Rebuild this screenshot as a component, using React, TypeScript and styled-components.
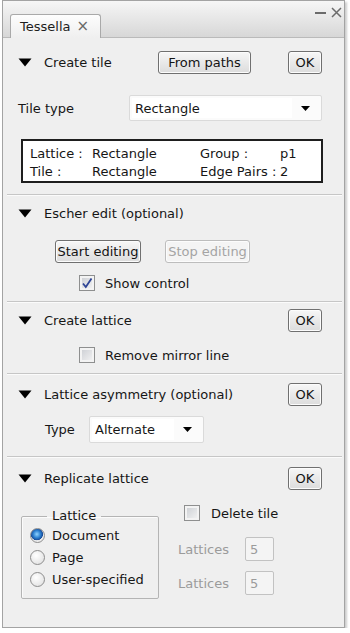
import React from "react";
import styled, { createGlobalStyle } from "styled-components";

const GlobalStyle = createGlobalStyle`
	html, body {
		margin: 0;
		padding: 0;
		background: #ffffff;
	}
	body {
		font-family: "DejaVu Sans", "Liberation Sans", sans-serif;
		font-size: 13px;
		color: #161616;
	}
`;

const Window = styled.div`
	margin-left: 2px;
	width: 341px;
	height: 626px;
	border: 1px solid #a3a3a3;
	background: #efefef;
	box-shadow: 2px 2px 2px rgba(0, 0, 0, 0.2);
	display: flex;
	flex-direction: column;
`;

const TitleBar = styled.div`
	box-sizing: border-box;
	height: 37px;
	display: flex;
	align-items: flex-end;
	padding-left: 7px;
	background: linear-gradient(#f6f6f6, #d7d7d7);
	border-bottom: 1px solid #bababa;
`;

const Tab = styled.div`
	box-sizing: border-box;
	width: 91px;
	height: 24px;
	margin-bottom: -1px;
	display: flex;
	align-items: center;
	gap: 6px;
	padding-left: 9px;
	border: 1px solid #a9a9a9;
	border-bottom: none;
	border-radius: 3px 3px 0 0;
	background: linear-gradient(#fdfdfd, #efefef);
	color: #1d1d1d;
`;

const TabClose = styled.span`
	color: #6a6a6a;
	font-size: 15px;
	line-height: 1;
`;

const WindowControls = styled.div`
	margin-left: auto;
	margin-right: 2px;
	align-self: flex-start;
	margin-top: 6px;
	display: flex;
	gap: 5px;
`;

const Section = styled.div<{ $top: number; $bottom: number }>`
	margin: 0 2px 0 4px;
	padding: ${(p) => p.$top}px 20px ${(p) => p.$bottom}px 11px;
	display: flex;
	flex-direction: column;
`;

const Rule = styled.div`
	margin: 0 2px 0 4px;
	border-top: 1px solid #c6c6c6;
	border-bottom: 1px solid #fbfbfb;
`;

const Header = styled.div`
	height: 23px;
	display: flex;
	align-items: center;
`;

const HeaderTitle = styled.span`
	margin-left: 12px;
`;

const Spacer = styled.div`
	flex: 1;
`;

const Button = styled.button<{ $w: number; $gap?: number }>`
	box-sizing: border-box;
	width: ${(p) => p.$w}px;
	height: 23px;
	margin: 0 ${(p) => p.$gap ?? 0}px 0 0;
	padding: 0;
	font: inherit;
	color: #141414;
	border: 1px solid #707070;
	border-radius: 3px;
	background: linear-gradient(#f7f7f7, #e9e9e9 50%, #dcdcdc);
	box-shadow: inset 0 0 0 1px #fcfcfc;

	&:disabled {
		color: #a4a4a4;
		border-color: #bdbdbd;
		background: #f4f4f4;
	}
`;

const Row = styled.div<{ $mt: number; $pl?: number }>`
	margin-top: ${(p) => p.$mt}px;
	padding-left: ${(p) => p.$pl ?? 0}px;
	display: flex;
	align-items: center;
`;

const Label = styled.span<{ $w?: number; $muted?: boolean }>`
	width: ${(p) => (p.$w ? `${p.$w}px` : "auto")};
	flex-shrink: 0;
	color: ${(p) => (p.$muted ? "#9b9b9b" : "inherit")};
`;

const Select = styled.div<{ $w: number; $h: number }>`
	box-sizing: border-box;
	width: ${(p) => p.$w}px;
	height: ${(p) => p.$h}px;
	display: flex;
	align-items: stretch;
	border: 1px solid #dadada;
	border-radius: 2px;
	background: #fbfbfb;
	padding: 2px;
`;

const SelectField = styled.div`
	flex: 1;
	display: flex;
	align-items: center;
	padding-left: 3px;
	background: #ffffff;
`;

const SelectArrow = styled.div`
	width: 27px;
	display: flex;
	align-items: center;
	justify-content: center;
`;

const InfoBox = styled.div`
	box-sizing: border-box;
	margin: 18px 0 0 3px;
	width: 302px;
	height: 44px;
	border: 2px solid #1e1e1e;
	background: #ffffff;
	padding: 3px 0 0 7px;
	display: grid;
	grid-template-columns: 62px 108px 80px auto;
	grid-auto-rows: 18px;
	align-items: center;
	white-space: nowrap;
`;

const CheckBox = styled.span`
	box-sizing: border-box;
	width: 16px;
	height: 16px;
	flex-shrink: 0;
	border: 1px solid #8e8f8f;
	background: linear-gradient(135deg, #c9ccd1, #f6f6f6);
	box-shadow: inset 0 0 0 2px #f3f3f3;
	display: flex;
	align-items: center;
	justify-content: center;
`;

const CheckLabel = styled.span<{ $gap: number }>`
	margin-left: ${(p) => p.$gap}px;
`;

const BottomRow = styled.div`
	margin-top: 15px;
	display: flex;
	align-items: flex-start;
`;

const GroupBox = styled.fieldset`
	box-sizing: border-box;
	margin: 3px 0 0 3px;
	width: 138px;
	padding: 0 0 8px 7px;
	border: 1px solid #b4b4b4;
	border-radius: 2px;
	box-shadow: inset 1px 1px 0 #fbfbfb;
	min-inline-size: 0;
`;

const GroupLegend = styled.legend`
	margin-left: 18px;
	padding: 0 5px;
	line-height: 16px;
`;

const RadioRow = styled.div`
	height: 22px;
	display: flex;
	align-items: center;
`;

const RadioDot = styled.span<{ $on?: boolean }>`
	box-sizing: border-box;
	width: 15px;
	height: 15px;
	margin: 0 7px 0 1px;
	border-radius: 50%;
	border: 1px solid #8d8d8d;
	background: ${(p) =>
		p.$on
			? "radial-gradient(circle at 45% 40%, #8fd3ff 0, #2b7fd0 35%, #1a4e9a 55%, #e9e9e9 60%, #f8f8f8 100%)"
			: "radial-gradient(circle at 40% 35%, #ffffff, #dcdcdc)"};
`;

const RightColumn = styled.div`
	margin-left: 19px;
	display: flex;
	flex-direction: column;
`;

const NumberBox = styled.div`
	box-sizing: border-box;
	width: 29px;
	height: 24px;
	border: 1px solid #c2c2c2;
	border-radius: 2px;
	background: #f4f4f4;
	color: #9b9b9b;
	padding-left: 4px;
	display: flex;
	align-items: center;
`;

const Triangle = () => (
	<svg width="14" height="9" viewBox="0 0 14 9">
		<polygon points="0.5,0.5 13.5,0.5 7,8.5" fill="#000" />
	</svg>
);

const SmallArrow = () => (
	<svg width="9" height="5" viewBox="0 0 9 5">
		<polygon points="0,0 9,0 4.5,5" fill="#000" />
	</svg>
);

const Check = () => (
	<svg width="12" height="12" viewBox="0 0 12 12">
		<path d="M2 6.5 L4.8 10 L10.5 1.5" fill="none" stroke="#2f4596" strokeWidth="1.8" />
	</svg>
);

function Checkbox({ checked, label, gap }: { checked?: boolean; label: string; gap: number }) {
	return (
		<>
			<CheckBox>{checked && <Check />}</CheckBox>
			<CheckLabel $gap={gap}>{label}</CheckLabel>
		</>
	);
}

export default function App() {
	return (
		<>
			<GlobalStyle />
			<Window>
				<TitleBar>
					<Tab>
						<span>Tessella</span>
						<TabClose>×</TabClose>
					</Tab>
					<WindowControls>
						<svg width="11" height="11" viewBox="0 0 11 11">
							<rect x="0" y="5" width="11" height="2" fill="#6b6b6b" />
						</svg>
						<svg width="11" height="11" viewBox="0 0 11 11">
							<path d="M1 1 L10 10 M10 1 L1 10" stroke="#6b6b6b" strokeWidth="1.5" />
						</svg>
					</WindowControls>
				</TitleBar>

				<Section $top={13} $bottom={11}>
					<Header>
						<Triangle />
						<HeaderTitle>Create tile</HeaderTitle>
						<Spacer />
						<Button $w={93} $gap={37}>From paths</Button>
						<Button $w={34}>OK</Button>
					</Header>
					<Row $mt={21}>
						<Label $w={111}>Tile type</Label>
						<Select $w={193} $h={26}>
							<SelectField>Rectangle</SelectField>
							<SelectArrow>
								<SmallArrow />
							</SelectArrow>
						</Select>
					</Row>
					<InfoBox>
						<span>Lattice :</span>
						<span>Rectangle</span>
						<span>Group :</span>
						<span>p1</span>
						<span>Tile :</span>
						<span>Rectangle</span>
						<span>Edge Pairs :</span>
						<span>2</span>
					</InfoBox>
				</Section>
				<Rule />

				<Section $top={6} $bottom={10}>
					<Header>
						<Triangle />
						<HeaderTitle>Escher edit (optional)</HeaderTitle>
					</Header>
					<Row $mt={15} $pl={37}>
						<Button $w={86} $gap={24}>Start editing</Button>
						<Button $w={85} disabled>
							Stop editing
						</Button>
					</Row>
					<Row $mt={12} $pl={61}>
						<Checkbox checked label="Show control" gap={10} />
					</Row>
				</Section>
				<Rule />

				<Section $top={6} $bottom={10}>
					<Header>
						<Triangle />
						<HeaderTitle>Create lattice</HeaderTitle>
						<Spacer />
						<Button $w={34}>OK</Button>
					</Header>
					<Row $mt={15} $pl={61}>
						<Checkbox label="Remove mirror line" gap={10} />
					</Row>
				</Section>
				<Rule />

				<Section $top={8} $bottom={13}>
					<Header>
						<Triangle />
						<HeaderTitle>Lattice asymmetry (optional)</HeaderTitle>
						<Spacer />
						<Button $w={34}>OK</Button>
					</Header>
					<Row $mt={10} $pl={27}>
						<Label $w={44}>Type</Label>
						<Select $w={115} $h={27}>
							<SelectField>Alternate</SelectField>
							<SelectArrow>
								<SmallArrow />
							</SelectArrow>
						</Select>
					</Row>
				</Section>
				<Rule />

				<Section $top={9} $bottom={0}>
					<Header>
						<Triangle />
						<HeaderTitle>Replicate lattice</HeaderTitle>
						<Spacer />
						<Button $w={34}>OK</Button>
					</Header>
					<BottomRow>
						<GroupBox>
							<GroupLegend>Lattice</GroupLegend>
							<RadioRow>
								<RadioDot $on />
								Document
							</RadioRow>
							<RadioRow>
								<RadioDot />
								Page
							</RadioRow>
							<RadioRow>
								<RadioDot />
								User-specified
							</RadioRow>
						</GroupBox>
						<RightColumn>
							<Row $mt={0} $pl={6}>
								<Checkbox label="Delete tile" gap={11} />
							</Row>
							<Row $mt={16}>
								<Label $w={67} $muted>
									Lattices
								</Label>
								<NumberBox>5</NumberBox>
							</Row>
							<Row $mt={10}>
								<Label $w={67} $muted>
									Lattices
								</Label>
								<NumberBox>5</NumberBox>
							</Row>
						</RightColumn>
					</BottomRow>
				</Section>
			</Window>
		</>
	);
}
